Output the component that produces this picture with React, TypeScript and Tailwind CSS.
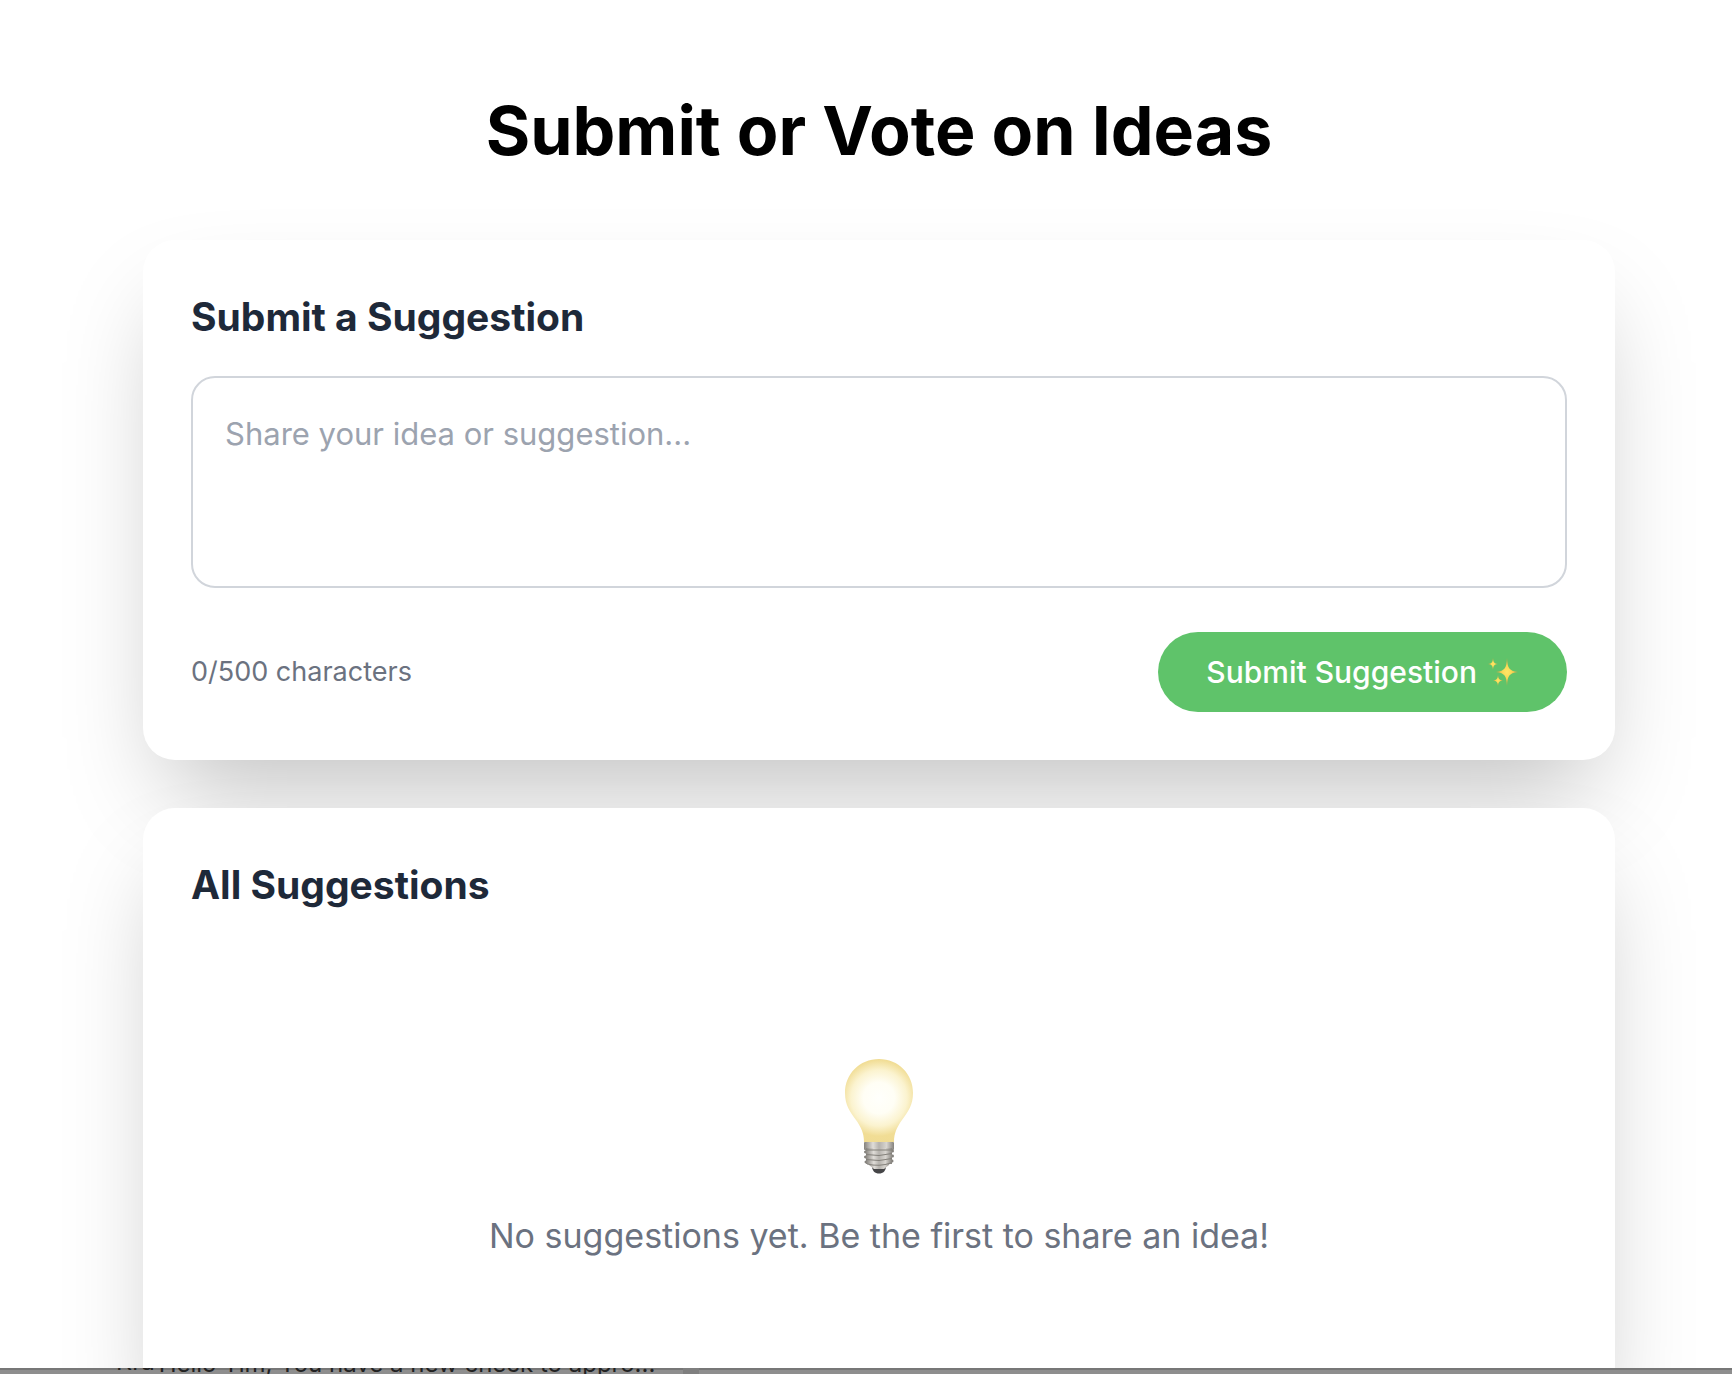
import { useState } from 'react'

const MAX_LENGTH = 500

function SparklesIcon() {
  return (
    <svg viewBox="0 0 32 32" className="size-8" aria-hidden="true">
      <defs>
        <radialGradient id="sparkle">
          <stop offset="0" stopColor="#ffe766" />
          <stop offset="0.4" stopColor="#f9da58" />
          <stop offset="1" stopColor="#d99a3e" />
        </radialGradient>
      </defs>
      <g fill="url(#sparkle)">
        <path d="M20 2 C20.7 12 21.5 14.600 31 16 C21.5 17.400 20.7 20 20 30 C19.3 20 18.5 17.400 9 16 C18.5 14.600 19.3 12 20 2Z" />
        <path d="M6 2 C6.5 6.5 7 7.5 11 8 C7 8.5 6.5 9.5 6 14 C5.5 9.5 5 8.5 1 8 C5 7.5 5.5 6.5 6 2Z" />
        <path d="M11 19 C11.5 23 12 24 16 24.5 C12 25 11.5 26 11 30 C10.5 26 10 25 6 24.5 C10 24 10.5 23 11 19Z" />
      </g>
    </svg>
  )
}

function BulbIcon() {
  return (
    <svg viewBox="0 0 70 116" className="h-[116px] w-[70px]" aria-hidden="true">
      <defs>
        <radialGradient id="glass" cx="35" cy="40" r="56" gradientUnits="userSpaceOnUse">
          <stop offset="0" stopColor="#fffffc" />
          <stop offset="0.28" stopColor="#fffef5" />
          <stop offset="0.5" stopColor="#fbf3cf" />
          <stop offset="0.68" stopColor="#f1dd95" />
          <stop offset="1" stopColor="#efda90" />
        </radialGradient>
        <linearGradient id="metal">
          <stop offset="0" stopColor="#85827d" />
          <stop offset="0.3" stopColor="#e0ddd8" />
          <stop offset="0.5" stopColor="#b5b2ad" />
          <stop offset="0.75" stopColor="#d8d5d0" />
          <stop offset="1" stopColor="#85827d" />
        </linearGradient>
      </defs>
      <path
        d="M35 1 C15.5 1 1 16 1 35 C1 47 6 54 12 62 C17 69 20 75 20 84 H50 C50 75 53 69 58 62 C64 54 69 47 69 35 C69 16 54.5 1 35 1Z"
        fill="url(#glass)"
      />
      <path d="M28 108 H42 C42 113 39 115.5 35 115.5 C31 115.5 28 113 28 108Z" fill="#454547" />
      <path d="M23 102 H47 L45 107 L40 111 H30 L25 107Z" fill="url(#metal)" />
      <rect x="20" y="84" width="30" height="8" rx="1" fill="url(#metal)" />
      <rect x="22" y="90" width="26" height="16" fill="url(#metal)" />
      <g stroke="url(#metal)" strokeWidth="3" strokeLinecap="round">
        <path d="M21.5 94 L48.5 93" />
        <path d="M21.5 99 L48.5 98" />
        <path d="M22 104 L48 103" />
      </g>
      <g stroke="#84817b" strokeWidth="1" fill="none">
        <path d="M21 92 H49" />
        <path d="M22 96.5 Q35 99 48 95.5" />
        <path d="M22 101.5 Q35 104 48 100.5" />
        <path d="M23 106 Q35 109 47 105" />
      </g>
    </svg>
  )
}

export default function App() {
  const [suggestion, setSuggestion] = useState('')

  return (
    <div className="flex h-screen flex-col overflow-hidden bg-white font-['Inter',sans-serif]">
      <main className="min-h-0 flex-1 overflow-hidden pt-24 pr-[117px] pl-[143px]">
        <h1 className="text-center text-[68px] leading-[68px] font-bold text-black">Submit or Vote on Ideas</h1>

        <form
          className="mt-[76px] rounded-[32px] bg-white p-12 shadow-[0_50px_100px_-24px_rgba(0,0,0,0.25)]"
          onSubmit={(e) => e.preventDefault()}
        >
          <h2 className="text-[39px] leading-[58px] font-bold text-gray-800">
            <label htmlFor="suggestion">Submit a Suggestion</label>
          </h2>
          <textarea
            id="suggestion"
            rows={3}
            maxLength={MAX_LENGTH}
            value={suggestion}
            onChange={(e) => setSuggestion(e.target.value)}
            placeholder="Share your idea or suggestion..."
            className="mt-[30px] block w-full resize-none rounded-3xl border-2 border-[#d1d5db] p-8 text-[31px] leading-[48px] placeholder:text-[#9ca3af]"
          />
          <div className="mt-11 flex items-center justify-between">
            <span className="text-[27px] leading-10 text-[#6b7280]">
              {suggestion.length}/{MAX_LENGTH} characters
            </span>
            <button
              type="submit"
              className="flex items-center gap-2.5 rounded-full bg-[#5fc36a] px-12 py-4 text-[30px] leading-[48px] font-medium text-white"
            >
              Submit Suggestion
              <SparklesIcon />
            </button>
          </div>
        </form>

        <section className="mt-12 rounded-[32px] bg-white p-12 shadow-[0_50px_100px_-24px_rgba(0,0,0,0.25)]">
          <h2 className="text-[39px] leading-[58px] font-bold text-gray-800">All Suggestions</h2>
          <div className="flex flex-col items-center pt-36 pb-24">
            <BulbIcon />
            <p className="mt-[34px] text-[34px] leading-[56px] text-[#6b7280]">
              No suggestions yet. Be the first to share an idea!
            </p>
          </div>
        </section>
      </main>

      {/* thin strip of the window behind the page */}
      <footer className="flex h-[6px] shrink-0 items-end gap-1 overflow-hidden bg-linear-to-b from-[#777777] from-30% to-[#8e8e8e] to-40% pl-[116px] text-2xl text-[#222222]">
        <span className="leading-6">Kra</span>
        <span className="leading-5">Hello Tim, You have a new check to appro...</span>
        <span className="ml-6 h-full w-4 bg-[#7f7f7f]" />
      </footer>
    </div>
  )
}
